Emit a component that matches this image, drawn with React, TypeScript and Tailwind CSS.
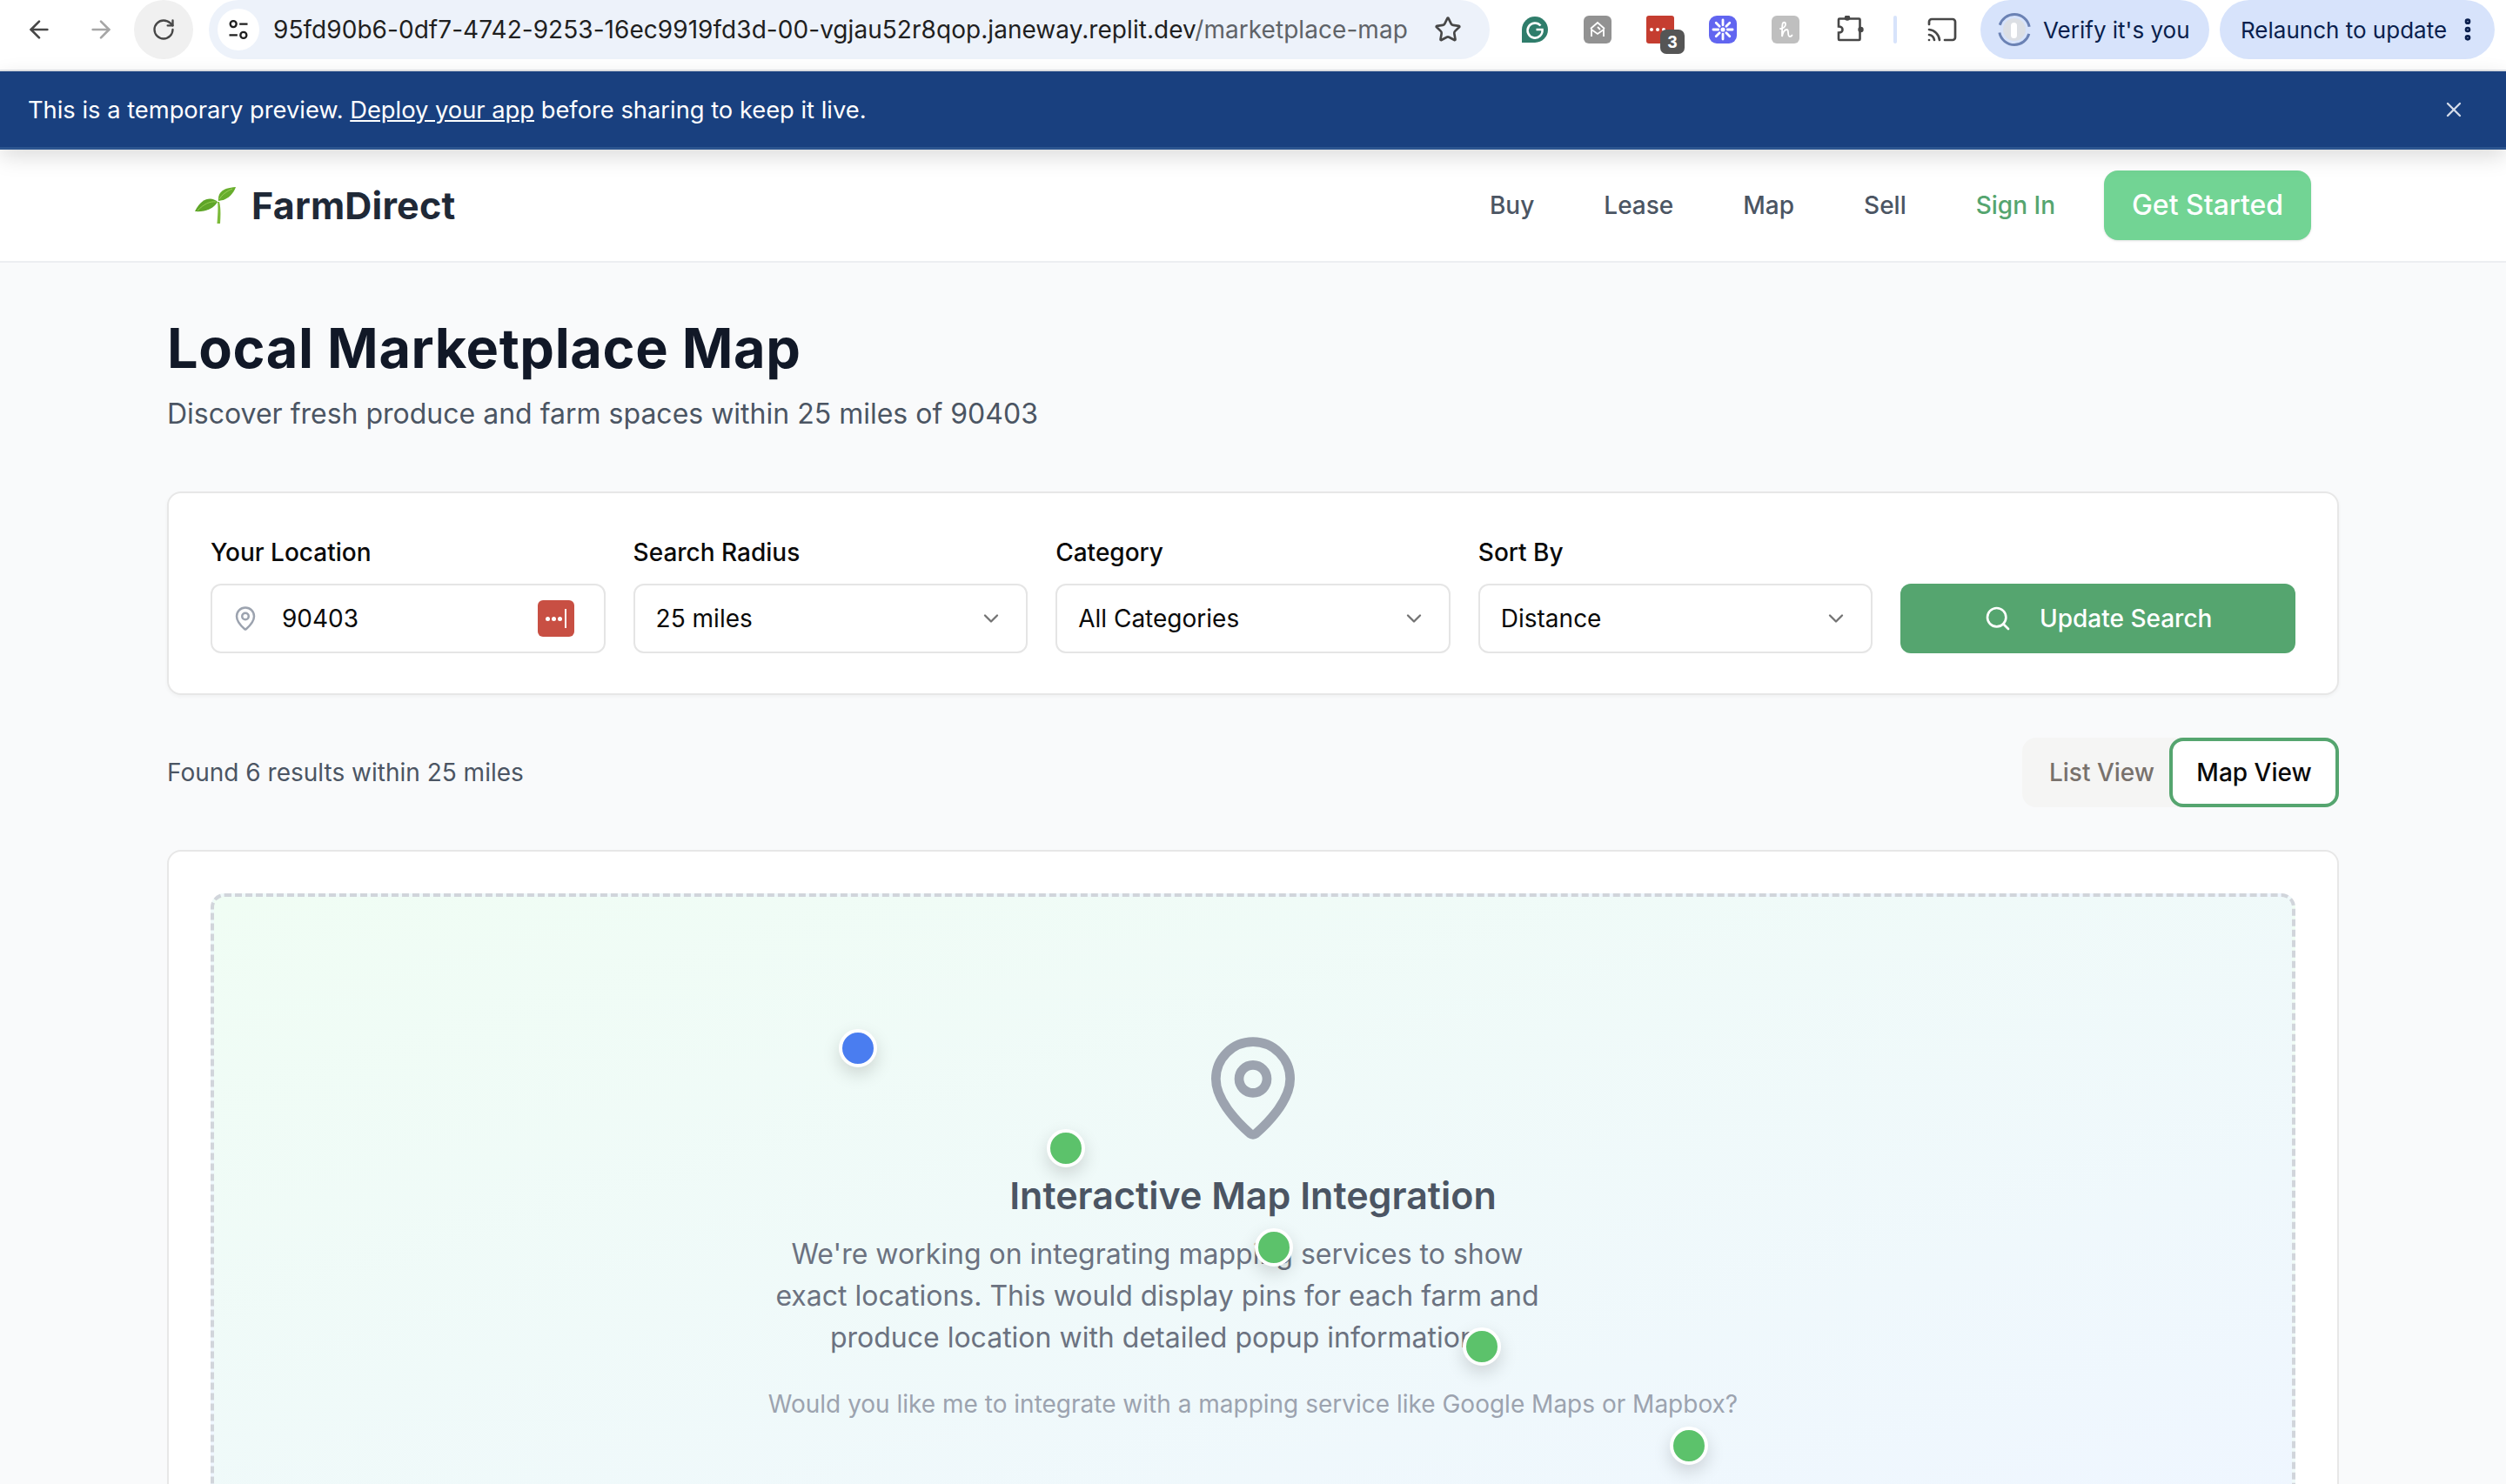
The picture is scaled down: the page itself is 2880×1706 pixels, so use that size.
import React from "react";
import { ArrowLeft, ArrowRight, RotateCw, Star, X, MapPin, ChevronDown, Search, Cast, MoreVertical } from "lucide-react";

const Field = ({ label, value }: { label: string; value: string }) => (
  <div className="flex flex-col">
    <label className="text-[28px] leading-[40px] font-medium text-[#0a0a0a] mb-[16px]">{label}</label>
    <div className="h-[80px] rounded-[12px] border-2 border-[#e5e5e5] bg-white pl-[24px] pr-[26px] flex items-center justify-between text-[28px] text-[#0a0a0a]">
      <span>{value}</span>
      <ChevronDown className="w-[28px] h-[28px] text-[#737373]" strokeWidth={2} />
    </div>
  </div>
);

const Ext = ({ className, children }: { className: string; children?: React.ReactNode }) => (
  <div className={`w-[32px] h-[32px] rounded-[6px] flex items-center justify-center shrink-0 ${className}`}>{children}</div>
);

const Pin = ({ className }: { className: string }) => (
  <div className={`absolute w-[44px] h-[44px] rounded-full border-[4px] border-white shadow-[0_8px_20px_rgba(0,0,0,0.15)] ${className}`} />
);

export default function App() {
  return (
    <div className="w-[2880px] h-[1706px] overflow-hidden bg-[#f9fafb] font-['Inter',sans-serif]">
      {/* Browser toolbar */}
      <div className="h-[82px] bg-white border-b-2 border-[#e1e4e8] flex items-start">
        <div className="h-[68px] w-full flex items-center">
          <ArrowLeft className="ml-[29px] w-[32px] h-[32px] text-[#474747] shrink-0" strokeWidth={2} />
          <ArrowRight className="ml-[39px] w-[32px] h-[32px] text-[#a6a6a6] shrink-0" strokeWidth={2} />
          <div className="ml-[22px] w-[68px] h-[68px] rounded-full bg-[#f0f0f0] flex items-center justify-center shrink-0">
            <RotateCw className="w-[28px] h-[28px] text-[#474747]" strokeWidth={2} />
          </div>
          <div className="ml-[18px] w-[1472px] h-[68px] rounded-full bg-[#edf2fa] flex items-center pl-[10px] pr-[32px] shrink-0">
            <div className="w-[48px] h-[48px] rounded-full bg-white flex items-center justify-center shrink-0">
              <svg viewBox="0 0 24 24" className="w-[28px] h-[28px]" fill="none" stroke="#1f1f1f" strokeWidth="2">
                <circle cx="7" cy="6.5" r="3" />
                <path d="M13 6.5h8M3 17.5h8" />
                <circle cx="17" cy="17.5" r="3" />
              </svg>
            </div>
            <div className="ml-[16px] text-[28px] tracking-[0.05px] text-[#1f1f1f] whitespace-nowrap">
              95fd90b6-0df7-4742-9253-16ec9919fd3d-00-vgjau52r8qop.janeway.replit.dev<span className="text-[#5f6368]">/marketplace-map</span>
            </div>
            <Star className="ml-auto w-[32px] h-[32px] text-[#474747] shrink-0" strokeWidth={2} />
          </div>
          {/* Grammarly */}
          <svg viewBox="0 0 30 30" className="ml-[37px] w-[30px] h-[30px] shrink-0">
            <path d="M15 0a15 15 0 1 1 0 30H0V15A15 15 0 0 1 15 0z" fill="#2f7d6b" />
            <path d="M21.5 10.5A8.5 8.5 0 1 0 23.5 15h-7" fill="none" stroke="#fff" strokeWidth="2.6" />
          </svg>
          <Ext className="ml-[41px] bg-[#929292]">
            <svg viewBox="0 0 24 24" className="w-[24px] h-[24px]" fill="none" stroke="#fff" strokeWidth="1.8">
              <path d="M4 11l8-7 8 7M5 20v-8l7 5 7-5v8M12 9l3 3" />
            </svg>
          </Ext>
          <div className="ml-[40px] relative w-[32px] h-[32px] rounded-[3px] bg-[#c53d30] shrink-0 flex items-center pl-[4px] gap-[3px]">
            <span className="w-[4px] h-[4px] rounded-full bg-white" />
            <span className="w-[4px] h-[4px] rounded-full bg-white" />
            <span className="w-[4px] h-[4px] rounded-full bg-white" />
            <div className="absolute left-[16px] top-[16px] w-[28px] h-[28px] rounded-[7px] bg-[#555555] flex items-center justify-center text-white text-[20px] font-bold font-['Liberation_Sans',sans-serif]">3</div>
          </div>
          <Ext className="ml-[40px] bg-[#6165f0] rounded-[9px]">
            <svg viewBox="0 0 24 24" className="w-[28px] h-[28px]" fill="none" stroke="#fff" strokeWidth="2.4" strokeLinecap="round">
              <path d="M12 2.5v5M12 16.5v5M2.5 12h5M16.5 12h5M5.3 5.3l3.4 3.4M15.3 15.3l3.4 3.4M18.7 5.3l-3.4 3.4M8.7 15.3l-3.4 3.4" />
              <circle cx="12" cy="12" r="2.2" fill="#fff" stroke="none" />
            </svg>
          </Ext>
          <Ext className="ml-[40px] bg-[#bfbfbf]">
            <svg viewBox="0 0 24 24" className="w-[24px] h-[24px]" fill="none" stroke="#fff" strokeWidth="1.8" strokeLinecap="round">
              <path d="M6 11c3 0 6-2 6-5 0-3-3-3-3.500 0-.5 3-.5 9-.5 14 1-5 3-8 5.500-8 3 0 0 8 3.500 8 1 0 2-.5 2.500-1.500" />
            </svg>
          </Ext>
          {/* Extensions puzzle */}
          <svg viewBox="0 0 32 32" className="ml-[42px] w-[32px] h-[32px] shrink-0" fill="none">
            <path d="M4 3.5h22.500a1 1 0 0 1 1 1V27a1 1 0 0 1-1 1H4a1 1 0 0 1-1-1v-7.500c3 0 4.500-1.500 4.500-3.500S6 12.500 3 12.500V4.500a1 1 0 0 1 1-1z" stroke="#474747" strokeWidth="2.6" />
            <circle cx="13" cy="2.5" r="3.2" fill="#474747" />
            <circle cx="28.5" cy="16" r="3.2" fill="#474747" />
          </svg>
          <div className="ml-[34px] w-[4px] h-[32px] rounded-full bg-[#d7e3fb] shrink-0" />
          <Cast className="ml-[34px] w-[36px] h-[36px] text-[#474747] shrink-0" strokeWidth={1.8} />
          <div className="ml-[26px] w-[263px] h-[68px] rounded-full bg-[#d7e3fb] flex items-center pl-[20px] shrink-0">
            <svg viewBox="0 0 38 38" className="w-[38px] h-[38px] shrink-0">
              <circle cx="19" cy="19" r="13" fill="#dcdfe4" />
              <circle cx="19" cy="19" r="17.5" fill="none" stroke="#6b82b4" strokeWidth="3" strokeDasharray="46 9" strokeDashoffset="-5" />
              <rect x="15" y="11" width="7" height="18" rx="3.5" fill="#fff" />
            </svg>
            <span className="ml-[14px] text-[26px] text-[#0a1f4d] whitespace-nowrap">Verify it's you</span>
          </div>
          <div className="ml-[12px] w-[316px] h-[68px] rounded-full bg-[#d7e3fb] flex items-center pl-[24px] shrink-0">
            <span className="text-[26px] text-[#0a1f4d] whitespace-nowrap">Relaunch to update</span>
            <MoreVertical className="ml-[8px] w-[32px] h-[32px] text-[#0a1f4d] shrink-0" strokeWidth={3} />
          </div>
        </div>
      </div>

      {/* Preview banner */}
      <div className="relative z-10 h-[90px] bg-[#19407f] border-b-[3px] border-[#2c558f] shadow-[0_8px_24px_rgba(0,0,0,0.14)] flex items-center justify-between pl-[32px] pr-[46px]">
        <p className="mt-[3px] text-[27.3px] text-white">
          This is a temporary preview. <span className="underline">Deploy your app</span> before sharing to keep it live.
        </p>
        <X className="w-[28px] h-[28px] text-[#d5dcea]" strokeWidth={2} />
      </div>

      {/* Nav */}
      <div className="h-[130px] bg-white border-b-2 border-[#eceef1]">
        <div className="w-[2496px] mx-auto h-[128px] px-[32px] flex items-center justify-between">
          <div className="flex items-center">
            <svg viewBox="224 215 48 44" className="w-[48px] h-[44px]">
              <path d="M250 233h2c2 7 1.500 17 1 25h-3.500c.5-8 1.500-18 .5-25z" fill="#7cba3a" />
              <path d="M251 232c-1-10 5-15 20-16-3 8-9 15-20 16z" fill="#67ad2c" />
              <path d="M252 230c3-5 8-9 15-12" fill="none" stroke="#9bd05a" strokeWidth="1" />
              <path d="M250 233c-7-6-18-5-26 11 11 1 22-3 26-11z" fill="#5ea528" />
              <path d="M248 233c-7-1-14 3-21 10" fill="none" stroke="#94cc52" strokeWidth="1" />
            </svg>
            <span className="ml-[17px] text-[43px] font-bold text-[#1f2937] tracking-[0.2px]">FarmDirect</span>
          </div>
          <div className="flex items-center">
            <span className="text-[28px] font-medium text-[#4b5563]">Buy</span>
            <span className="ml-[80px] text-[28px] font-medium text-[#4b5563]">Lease</span>
            <span className="ml-[80px] text-[28px] font-medium text-[#4b5563]">Map</span>
            <span className="ml-[80px] text-[28px] font-medium text-[#4b5563]">Sell</span>
            <span className="ml-[80px] text-[28px] font-medium text-[#55a56f]">Sign In</span>
            <div className="ml-[56px] w-[238px] h-[80px] rounded-[16px] bg-[#72d494] shadow-sm flex items-center justify-center text-[32px] font-medium text-white">
              Get Started
            </div>
          </div>
        </div>
      </div>

      {/* Main */}
      <div className="w-[2496px] mx-auto">
        <h1 className="mt-[62px] text-[63px] leading-[72px] font-bold text-[#111827] tracking-[0.6px]">Local Marketplace Map</h1>
        <p className="mt-[20px] text-[32px] leading-[40px] text-[#4b5563]">Discover fresh produce and farm spaces within 25 miles of 90403</p>

        <div className="mt-[69px] h-[234px] rounded-[16px] bg-white border-2 border-[#e7e7e7] shadow-[0_2px_4px_rgba(0,0,0,0.04)] px-[48px] pt-[48px] grid grid-cols-5 gap-[32px]">
          <div className="flex flex-col">
            <label className="text-[28px] leading-[40px] font-medium text-[#0a0a0a] mb-[16px]">Your Location</label>
            <div className="h-[80px] rounded-[12px] border-2 border-[#e5e5e5] bg-white pl-[22px] pr-[34px] flex items-center text-[28px] text-[#0a0a0a]">
              <MapPin className="ml-[1px] w-[30px] h-[30px] text-[#9ca3af] shrink-0" strokeWidth={2} />
              <span className="ml-[27px]">90403</span>
              <div className="ml-auto w-[42px] h-[42px] rounded-[6px] bg-[#c84f43] flex items-center justify-center gap-[2px]">
                <span className="w-[5px] h-[5px] rounded-full bg-white" />
                <span className="w-[5px] h-[5px] rounded-full bg-white" />
                <span className="w-[5px] h-[5px] rounded-full bg-white" />
                <span className="ml-[1px] w-[2px] h-[22px] bg-white" />
              </div>
            </div>
          </div>
          <Field label="Search Radius" value="25 miles" />
          <Field label="Category" value="All Categories" />
          <Field label="Sort By" value="Distance" />
          <div className="flex items-start pt-[56px]">
            <div className="w-full h-[80px] rounded-[12px] bg-[#55a56f] flex items-center justify-center text-[28px] font-medium text-white">
              <Search className="w-[32px] h-[32px]" strokeWidth={2} />
              <span className="ml-[32px]">Update Search</span>
            </div>
          </div>
        </div>

        <div className="mt-[49px] flex items-center justify-between h-[80px]">
          <span className="text-[28px] text-[#4b5563]">Found 6 results within 25 miles</span>
          <div className="flex h-[80px] rounded-[16px] bg-[#f5f5f4]">
            <div className="w-[169px] pl-[14px] flex items-center justify-center text-[28px] font-medium text-[#78716c]">List View</div>
            <div className="w-[195px] rounded-[16px] border-[4px] border-[#55a56f] bg-white flex items-center justify-center text-[28px] font-medium text-[#0a0a0a]">Map View</div>
          </div>
        </div>

        <div className="mt-[49px] rounded-[16px] bg-white border-2 border-[#e7e7e7] p-[48px]">
          <div className="relative h-[720px] rounded-[16px] border-[4px] border-dashed border-[#d1d5db] bg-linear-to-br from-[#f0fdf4] to-[#eff6ff] flex flex-col items-center pt-[156px]">
            <MapPin className="w-[128px] h-[128px] text-[#9ca3af]" strokeWidth={2} />
            <h2 className="mt-[31px] text-[43px] leading-[56px] font-semibold text-[#4b5563]">Interactive Map Integration</h2>
            <p className="mt-[16px] mr-[220px] w-[896px] text-center text-[32px] leading-[48px] text-[#6b7280]">
              We're working on integrating mapping services to show exact locations. This would display pins for each farm and produce location with detailed popup information.
            </p>
            <p className="mt-[32px] text-[28px] leading-[40px] text-[#9ca3af]">Would you like me to integrate with a mapping service like Google Maps or Mapbox?</p>
            <Pin className="left-[718px] top-[152px] bg-[#4a7df0]" />
            <Pin className="left-[957px] top-[267px] bg-[#5cc26b]" />
            <Pin className="left-[1196px] top-[381px] bg-[#5cc26b]" />
            <Pin className="left-[1435px] top-[495px] bg-[#5cc26b]" />
            <Pin className="left-[1673px] top-[609px] bg-[#5cc26b]" />
          </div>
        </div>
      </div>
    </div>
  );
}
